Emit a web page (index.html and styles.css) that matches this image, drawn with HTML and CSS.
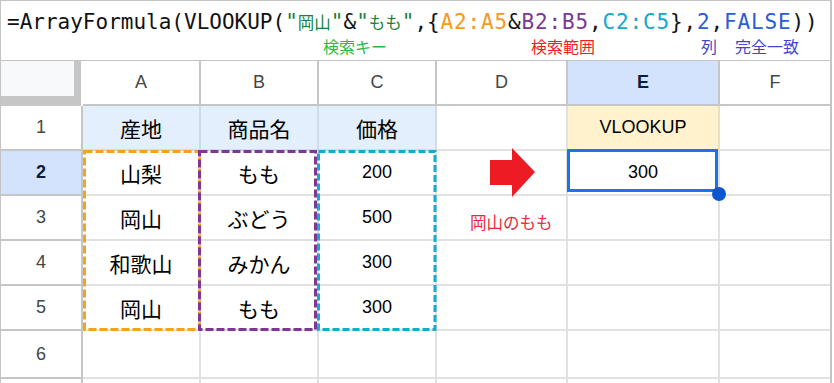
FILE: index.html
```html
<!DOCTYPE html>
<html lang="ja">
<head>
<meta charset="utf-8">
<link rel="stylesheet" href="styles.css">
</head>
<body>
<div class="sheet">
  <div class="fbar">
    <div class="formula"><span class="left">=ArrayFormula(VLOOKUP(</span><span class="str">"<span class="cj">岡山</span>"</span><span>&amp;</span><span class="str">"<span class="cj">もも</span>"</span><span>,</span><span class="right">{<span class="ra">A2:A5</span>&amp;<span class="rb">B2:B5</span>,<span class="rc">C2:C5</span>},<span class="num">2</span>,<span class="num">FALSE</span>))</span></div>
    <div class="labels"><span class="lb lb-key">検索キー</span><span class="lb lb-range">検索範囲</span><span class="lb lb-col">列</span><span class="lb lb-exact">完全一致</span></div>
  </div>
  <div class="grid">
    <div class="corner"><div class="corner-in"></div></div>
    <div class="c hd">A</div>
    <div class="c hd">B</div>
    <div class="c hd">C</div>
    <div class="c hd">D</div>
    <div class="c hd hl">E</div>
    <div class="c hd last">F</div>

    <div class="c rh">1</div>
    <div class="c t1"><span class="ja">産地</span></div>
    <div class="c t1"><span class="ja">商品名</span></div>
    <div class="c t1"><span class="ja">価格</span></div>
    <div class="c"></div>
    <div class="c vk">VLOOKUP</div>
    <div class="c last"></div>

    <div class="c rh hl">2</div>
    <div class="c"><span class="ja">山梨</span></div>
    <div class="c"><span class="ja">もも</span></div>
    <div class="c">200</div>
    <div class="c arrow-cell"><svg class="arrow" width="50" height="52" viewBox="0 0 50 52"><polygon points="3,13 25,13 25,1 48,25 25,50 25,38 3,38" fill="#ed1c24"/></svg></div>
    <div class="c sel">300<span class="dot"></span></div>
    <div class="c last"></div>

    <div class="c rh">3</div>
    <div class="c"><span class="ja">岡山</span></div>
    <div class="c"><span class="ja">ぶどう</span></div>
    <div class="c">500</div>
    <div class="c note-cell"><span class="note">岡山のもも</span></div>
    <div class="c"></div>
    <div class="c last"></div>

    <div class="c rh">4</div>
    <div class="c"><span class="ja">和歌山</span></div>
    <div class="c"><span class="ja">みかん</span></div>
    <div class="c">300</div>
    <div class="c"></div>
    <div class="c"></div>
    <div class="c last"></div>

    <div class="c rh">5</div>
    <div class="c"><span class="ja">岡山</span></div>
    <div class="c"><span class="ja">もも</span></div>
    <div class="c">300</div>
    <div class="c"></div>
    <div class="c"></div>
    <div class="c last"></div>

    <div class="c rh">6</div>
    <div class="c"></div>
    <div class="c"></div>
    <div class="c"></div>
    <div class="c"></div>
    <div class="c"></div>
    <div class="c last"></div>

    <div class="c rh"></div>
    <div class="c"></div>
    <div class="c"></div>
    <div class="c"></div>
    <div class="c"></div>
    <div class="c"></div>
    <div class="c last"></div>
  </div>
  <svg class="ranges" width="834" height="383" viewBox="0 0 834 383">
    <rect x="84.5" y="151.5" width="115" height="178" fill="none" stroke="#f7a11f" stroke-width="3" stroke-dasharray="8 3"/>
    <rect x="199.5" y="151.5" width="116" height="178" fill="none" stroke="#7e3794" stroke-width="3" stroke-dasharray="8 3"/>
    <rect x="318.5" y="151.5" width="116.5" height="178" fill="none" stroke="#14abcf" stroke-width="3" stroke-dasharray="7 3"/>
  </svg>
</div>
</body>
</html>
```
FILE: styles.css
```css
html, body {
  margin: 0;
  padding: 0;
  background: #fff;
}
body {
  width: 834px;
  height: 383px;
  overflow: hidden;
}
.sheet {
  position: relative;
  width: 832px;
  box-sizing: border-box;
  border-left: 1px solid #c4c4c4;
  border-top: 1px solid #c4c4c4;
  border-right: 2px solid #c4c4c4;
  font-family: "Liberation Sans", "Noto Sans CJK JP", sans-serif;
}
.fbar {
  height: 60px;
  box-sizing: border-box;
  border-bottom: 1px solid #c4c4c4;
  padding: 7px 0 0 6px;
}
.formula {
  font-family: "DejaVu Sans Mono", "Noto Sans CJK JP", monospace;
  font-size: 21px;
  line-height: 28px;
  color: #111;
  white-space: nowrap;
}
.formula .cj {
  font-family: "Noto Sans CJK JP", sans-serif;
  font-size: 16.5px;
}
.formula .str { color: #188038; }
.formula .right { letter-spacing: 0.85px; }
.formula .ra { color: #f7981d; }
.formula .rb { color: #7e3794; }
.formula .rc { color: #11a9cc; }
.formula .num { color: #2b5bd6; }
.labels {
  display: flex;
  padding-left: 316px;
  font-family: "Noto Sans CJK JP", sans-serif;
  font-size: 16px;
  line-height: 20px;
}
.lb-key { color: #2fb84a; }
.lb-range { color: #ee1d23; margin-left: 144px; }
.lb-col { color: #3f48cc; margin-left: 106px; }
.lb-exact { color: #3f48cc; margin-left: 18px; }

.grid {
  display: grid;
  grid-template-columns: 82px 118px 118px 118px 131px 152px 110px;
  grid-template-rows: 45px 45px 45px 45px 45px 45px 48px 20px;
}
.c {
  box-sizing: border-box;
  border-right: 2px solid #e1e1e1;
  border-bottom: 2px solid #e1e1e1;
  display: flex;
  align-items: center;
  justify-content: center;
  font-size: 18px;
  color: #000;
  position: relative;
}
.c.last { border-right: none; }
.ja { font-size: 21px; }
.corner {
  background: #c6c6c6;
  border-right: 2px solid #fff;
  box-sizing: border-box;
}
.corner-in {
  width: 73px;
  height: 35px;
  background: #f8f9fa;
}
.hd {
  border-color: #c4c7c5;
  color: #444746;
}
.rh {
  border-color: #c4c7c5;
  color: #444746;
}
.hl {
  background: #d3e3fd;
  color: #0b1d3f;
  font-weight: bold;
}
.t1 {
  background: #e3effc;
  border-color: #cfdbe9;
}
.vk {
  background: #fff2cc;
  border-color: #eadfc0;
}
.sel::after {
  content: "";
  position: absolute;
  top: -2px;
  left: -1px;
  right: 0;
  bottom: 2px;
  border: 3px solid #1a73e8;
}
.dot {
  position: absolute;
  left: 144px;
  top: 36px;
  width: 14px;
  height: 14px;
  border-radius: 50%;
  background: #0b57d0;
  z-index: 2;
}
.arrow {
  position: absolute;
  left: 50px;
  top: -4px;
}
.note-cell {
  justify-content: flex-start;
  padding: 8px 0 0 33px;
}
.note {
  font-family: "Noto Sans CJK JP", sans-serif;
  font-size: 16.5px;
  color: #e8293a;
}
.ranges {
  position: absolute;
  top: -1px;
  left: -1px;
  pointer-events: none;
}
```
